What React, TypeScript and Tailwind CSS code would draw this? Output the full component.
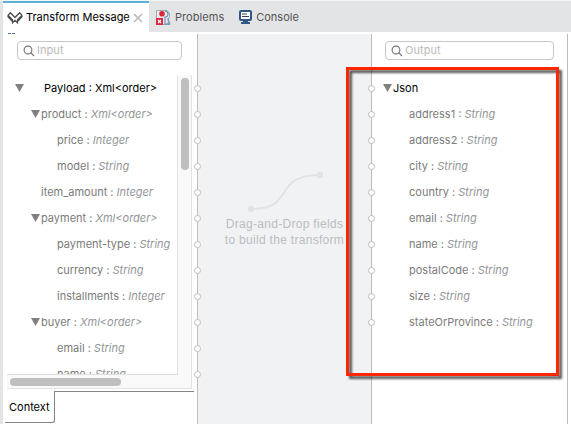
import React from "react";

type Field = {
  name: string;
  type?: string;
  indent: string;
  open?: boolean;
  root?: boolean;
  gap?: string;
};

const inputFields: Field[] = [
  { name: "Payload : Xml<order>", indent: "pl-[8px]", open: true, root: true, gap: "w-[29px]" },
  { name: "product :", type: "Xml<order>", indent: "pl-[24px]", open: true },
  { name: "price :", type: "Integer", indent: "pl-[50px]" },
  { name: "model :", type: "String", indent: "pl-[50px]" },
  { name: "item_amount :", type: "Integer", indent: "pl-[34px]" },
  { name: "payment :", type: "Xml<order>", indent: "pl-[24px]", open: true },
  { name: "payment-type :", type: "String", indent: "pl-[50px]" },
  { name: "currency :", type: "String", indent: "pl-[50px]" },
  { name: "installments :", type: "Integer", indent: "pl-[50px]" },
  { name: "buyer :", type: "Xml<order>", indent: "pl-[24px]", open: true },
  { name: "email :", type: "String", indent: "pl-[50px]" },
  { name: "name :", type: "String", indent: "pl-[50px]" },
];

const outputFields: Field[] = [
  { name: "Json", indent: "pl-[11px]", open: true, root: true },
  ...["address1", "address2", "city", "country", "email", "name", "postalCode", "size", "stateOrProvince"].map(
    (name) => ({ name: `${name} :`, type: "String", indent: "pl-[37px]" }),
  ),
];

function Row({ field }: { field: Field }) {
  return (
    <div className={`flex h-[26px] shrink-0 items-center whitespace-pre text-[11px] leading-[26px] ${field.indent}`}>
      {field.open && (
        <span className={`shrink-0 ${field.gap ?? "w-[10px]"}`}>
          <svg width="9" height="8" viewBox="0 0 9 8" className="block">
            <path d="M0 0H9L4.5 8Z" fill="#808080" />
          </svg>
        </span>
      )}
      <span className={field.root ? "text-black" : "text-[#7b7b7b]"}>{field.name}</span>
      {field.type && <span className="pl-[3px] italic text-[#929699]">{field.type}</span>}
    </div>
  );
}

function Ports({ count }: { count: number }) {
  return (
    <div className="absolute -left-[4px] top-[51px] z-10 flex flex-col gap-[19px]">
      {Array.from({ length: count }, (_, i) => (
        <span key={i} className="block size-[7px] rounded-full border border-[#bdbdbd] bg-white" />
      ))}
    </div>
  );
}

function Search({ label, width }: { label: string; width: string }) {
  return (
    <div className={`flex h-[19px] items-center rounded-[4px] border border-[#c6c6c6] bg-white pl-[5px] ${width}`}>
      <svg width="12" height="12" viewBox="0 0 12 12" fill="none" stroke="#717171" strokeWidth="1.1">
        <circle cx="5" cy="5" r="3.9" />
        <path d="M8 8L11 11" />
      </svg>
      <span className="pl-[2px] text-[11px] tracking-[0.05px] text-[#b9b9b9]">{label}</span>
    </div>
  );
}

function Header() {
  return (
    <header className="flex h-[32px] shrink-0 border-t border-[#f7f7f7] bg-[#e3e4e6] pl-[3px] text-[11px]">
      <div className="flex w-[146px] items-center border-t-2 border-[#5bb2d6] bg-white pl-[4px] text-black">
        <svg width="16" height="13" viewBox="0 0 16 13" fill="none" stroke="#505050" strokeWidth="1.3" className="shrink-0">
          <path d="M1 4.2L3.4 1.7L8 6.5L12.6 1.7L15 4.2M1 4.2L5.5 8.8V11.8L8 9.3L10.5 11.8V8.8L15 4.2M1 4.2V5.8L5.5 10.5M15 4.2V5.8L10.5 10.5" />
        </svg>
        <span className="whitespace-nowrap pl-[3px]">Transform Message</span>
        <svg width="10" height="10" viewBox="0 0 10 10" className="ml-auto mr-[6px] shrink-0" fill="none" stroke="#b7b7b7" strokeWidth="1.5">
          <path d="M1 1L9 9M9 1L1 9" />
        </svg>
      </div>
      <div className="flex items-center pl-[7px] pt-px text-[#555]">
        <svg width="15" height="17" viewBox="0 0 15 17">
          <path d="M.5 1.5H11L13.5 4V8L12 10V13.5H14V15.5H.5Z" fill="#e8edf3" stroke="#929c9c" strokeWidth=".8" />
          <path d="M9 2Q12 2 12 5T9 8V14M12 9L13 14M8 15H14" fill="none" stroke="#7897b5" strokeWidth="1.3" />
          <circle cx="6" cy="4.8" r="2.8" fill="#d8263d" />
          <path d="M0 9H7V16H0Z" fill="#d8263d" />
          <path d="M2 11L5 14M5 11L2 14" stroke="white" strokeWidth="1.2" />
        </svg>
        <span className="pl-[4px] tracking-[0.05px]">Problems</span>
        <svg width="13" height="14" viewBox="0 0 13 14" className="ml-[15px]">
          <rect x="1" y="1" width="11" height="9" rx="1" fill="white" stroke="#315687" strokeWidth="2" />
          <path d="M3 4H8M3 6.5H10" stroke="#31466a" strokeWidth="1" />
          <path d="M4 10H9V12H11V14H2V12H4Z" fill="#315687" />
        </svg>
        <span className="pl-[4px]">Console</span>
      </div>
    </header>
  );
}

export default function App() {
  return (
    <main className="relative flex h-[424px] w-[571px] flex-col overflow-hidden bg-white font-['Inter','Liberation_Sans',sans-serif]">
      <Header />
      <div className="flex min-h-0 flex-1">
        <div className="w-[3px] shrink-0 bg-[#e3e4e6]" />
        <section className="flex w-[194px] shrink-0 flex-col">
          <div className="h-[9px] pl-[5px]">
            <div className="flex gap-px pt-px"><i className="h-px w-[3px] bg-[#526b94]" /><i className="h-px w-[3px] bg-[#526b94]" /></div>
          </div>
          <div className="pl-[14px]"><Search label="Input" width="w-[165px]" /></div>
          <div className="ml-[4px] mt-[15px] flex h-[314px] w-[185px] shrink-0 flex-col border-b border-[#e3e3e3]">
            <div className="flex h-[300px] shrink-0">
              <div className="flex w-[170px] flex-col overflow-hidden border-b border-[#dedede]">
                {inputFields.map((field, i) => <Row key={i} field={field} />)}
              </div>
              <div className="w-[15px] border-x border-[#e3e3e3] bg-[#f9f9f9] pl-[3px] pt-[3px]">
                <div className="h-[92px] w-[8px] rounded-full bg-[#bfbfbf]" />
              </div>
            </div>
            <div className="flex flex-1 items-center border-r border-[#e3e3e3] bg-[#f9f9f9] pl-[3px]">
              <div className="h-[8px] w-[111px] rounded-full bg-[#bfbfbf]" />
            </div>
          </div>
          <div className="mt-[2px] flex h-[32px] shrink-0">
            <div className="ml-[2px] flex w-[50px] items-center rounded-br-[3px] border-b border-r border-[#858585] pl-[4px] pt-px text-[11px] text-black">Context</div>
            <div className="w-[139px] border-t border-[#858585]" />
          </div>
        </section>
        <section className="relative mt-[2px] flex w-[174px] shrink-0 flex-col items-center border-l border-[#bdbdbd] bg-[#f1f2f4] pt-[138px]">
          <Ports count={12} />
          <svg width="76" height="42" viewBox="0 0 76 42" fill="none">
            <path d="M4 37C50 37 24 3 73 3" stroke="#e1e3e5" strokeWidth="2" />
            <circle cx="4" cy="37" r="3.2" fill="#e1e3e5" /><circle cx="73" cy="3" r="3.2" fill="#e1e3e5" />
          </svg>
          <div className="whitespace-nowrap pt-[2px] text-center font-['Liberation_Sans',Arial,sans-serif] text-[12px] leading-[16px] tracking-[0.3px] text-[#b9bec1]">Drag-and-Drop fields<br />to build the transform</div>
        </section>
        <section className="relative mt-[2px] w-[197px] shrink-0 border-x border-[#bdbdbd] pt-[7px]">
          <Ports count={10} />
          <div className="pl-[13px]"><Search label="Output" width="w-[169px]" /></div>
          <div className="mt-[15px]">{outputFields.map((field) => <Row key={field.name} field={field} />)}</div>
        </section>
      </div>
      <div className="pointer-events-none absolute left-[346px] top-[67px] z-20 h-[309px] w-[213px] border-[3px] border-[#ff2600] [filter:drop-shadow(3px_3px_1px_rgba(0,0,0,0.65))]" />
    </main>
  );
}
